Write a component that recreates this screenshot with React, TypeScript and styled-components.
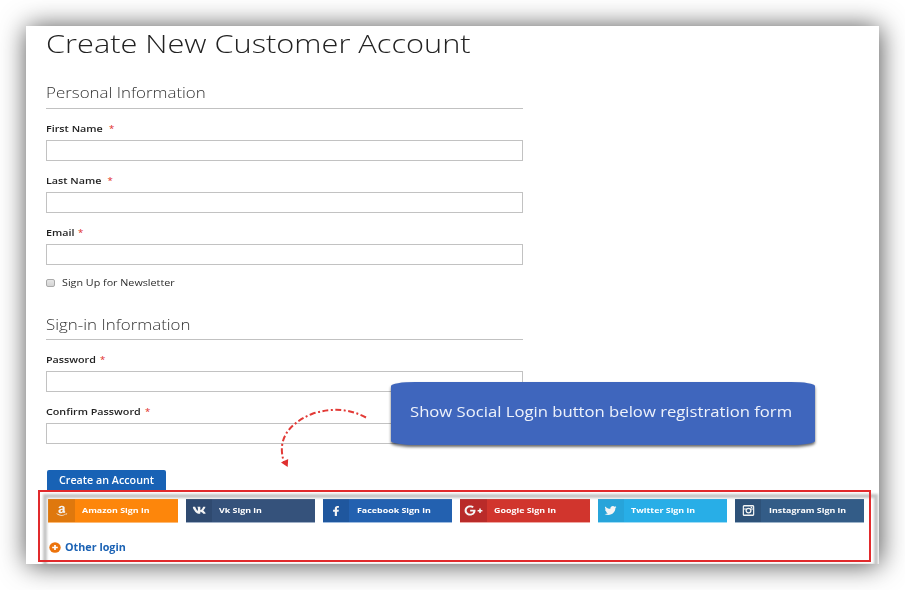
import React from "react";
import styled, { createGlobalStyle } from "styled-components";
import { FaAmazon, FaVk, FaFacebookF, FaGooglePlusG, FaTwitter } from "react-icons/fa";

const GlobalStyle = createGlobalStyle`
  * { box-sizing: border-box; }
  body { margin: 0; background: #fff; font-family: "Open Sans", sans-serif; }
`;

const Page = styled.main`
  width: 905px;
  height: 590px;
  padding: 26px;
  overflow: hidden;
  background: #fff;
`;

const Panel = styled.section`
  position: relative;
  width: 853px;
  height: 538px;
  padding-left: 20px;
  background: #fff;
  box-shadow: 1px 1px 25px rgba(0, 0, 0, 0.7);
  display: flex;
  flex-direction: column;
`;

/* Text widened horizontally from its left edge. */
const Wide = styled.span<{ $x: number }>`
  display: inline-block;
  white-space: nowrap;
  transform: scaleX(${(p) => p.$x});
  transform-origin: left center;
`;

const Title = styled.h1`
  margin: 0;
  height: 53px;
  font-size: 25.5px;
  line-height: 35px;
  font-weight: 300;
  color: #222;
`;

const Form = styled.form`
  width: 477px;
  display: flex;
  flex-direction: column;
`;

const Legend = styled.h2<{ $gap?: number; $line?: number }>`
  margin: ${(p) => p.$gap ?? 0}px 0 0;
  height: 30px;
  border-bottom: 1px solid #c1c1c1;
  font-size: 15px;
  line-height: ${(p) => p.$line ?? 27}px;
  font-weight: 300;
  color: #333;
`;

const Field = styled.label`
  height: 52px;
  padding-top: 10px;
  display: flex;
  flex-direction: column;
`;

const LabelRow = styled.span`
  height: 21px;
  display: flex;
  font-size: 9.6px;
  line-height: 19px;
  font-weight: 600;
  color: #222;
`;

const LabelText = styled.span<{ $w: number }>`
  width: ${(p) => p.$w}px;
`;

const Star = styled.span`
  color: #e02b27;
  font-weight: 400;
`;

const Input = styled.input`
  width: 477px;
  height: 21px;
  border: 1px solid #c2c2c2;
  background: #fff;
`;

const Newsletter = styled.label`
  display: flex;
  align-items: center;
  height: 17px;
  margin-top: 9px;
  font-size: 9.6px;
  color: #2c2c2c;
`;

const Box = styled.span`
  width: 9px;
  height: 8px;
  margin-right: 7px;
  border: 1px solid #a9a9a9;
  border-radius: 2px;
  background: linear-gradient(#e6e6e6, #d4d4d4);
`;

const Submit = styled.button`
  width: 119.5px;
  height: 21px;
  margin: 26px 0 0 0.5px;
  padding: 0 0 0 12px;
  border: 0;
  border-radius: 2px 2px 0 0;
  background: #1862b5;
  color: #fff;
  text-align: left;
  font: 600 9.8px/19px "Open Sans", sans-serif;
`;

const SocialRow = styled.div`
  display: grid;
  grid-template-columns: repeat(6, 129.5px);
  column-gap: 7.8px;
  margin: 8px 0 0 2.4px;
`;

const SocialButton = styled.a<{ $bg: string; $fade: string }>`
  display: flex;
  height: 24px;
  color: #fff;
  background: ${(p) => p.$bg};
  border-bottom: 1px solid ${(p) => p.$fade};
  font-size: 7.7px;
  line-height: 22px;
  font-weight: 700;
`;

const IconCell = styled.span<{ $bg: string }>`
  width: 26.5px;
  height: 23px;
  margin-right: 7.3px;
  display: flex;
  align-items: center;
  justify-content: center;
  background: ${(p) => p.$bg};
  color: #f4f4f4;

  svg { transform: scaleX(1.1); }
`;

const Other = styled.a`
  display: flex;
  align-items: center;
  gap: 4px;
  margin: 15px 0 0 3px;
  height: 18px;
  font-size: 9.8px;
  font-weight: 700;
  color: #1b62b4;
`;

const FrameClip = styled.div`
  position: absolute;
  left: 12px;
  top: 464px;
  width: 841px;
  height: 74px;
  overflow: hidden;
  pointer-events: none;
`;

const FrameShadow = styled.div`
  position: absolute;
  left: 4.5px;
  top: 4px;
  width: 835px;
  height: 74px;
  border: 4px solid #c6c6c6;
  filter: blur(1px);
`;

const Frame = styled.div`
  position: relative;
  width: 833px;
  height: 72px;
  border: 2px solid #e12a2c;
`;

const Callout = styled.aside`
  position: absolute;
  left: 365px;
  top: 356px;
  width: 424px;
  height: 62.5px;
  padding-left: 19px;
  border-radius: 24px / 4px;
  background: #3f66bd;
  box-shadow: 0 2px 3px rgba(0, 0, 0, 0.6);
  color: #eef2fb;
  font-size: 14px;
  line-height: 59px;
`;

const Arrow = styled.svg`
  position: absolute;
  left: 244px;
  top: 374px;
`;

const CameraIcon = () => (
  <svg width="11" height="11" viewBox="0 0 12 11" fill="none" stroke="#f4f4f4" preserveAspectRatio="none">
    <rect x="0.8" y="0.8" width="10.4" height="9.4" rx="1" strokeWidth="1.4" />
    <path d="M1 4h2.600M8.400 4H11" strokeWidth="1.1" />
    <ellipse cx="6" cy="5.6" rx="2.4" ry="2.2" strokeWidth="1.3" />
    <path d="M8.200 2.400h1.500" strokeWidth="1.4" />
  </svg>
);

const PlusIcon = () => (
  <svg width="12" height="11" viewBox="0 0 12 11">
    <ellipse cx="6" cy="5.5" rx="5.7" ry="5.2" fill="#ec730c" />
    <path d="M6 3v5M3.200 5.500h5.600" stroke="#fff" strokeWidth="1.7" />
  </svg>
);

const socials = [
  { name: "Amazon", bg: "#fd860b", dark: "#df780d", fade: "#fdb974", icon: <FaAmazon size={11.5} /> },
  { name: "Vk", bg: "#35527b", dark: "#2f4a70", fade: "#9fafc6", icon: <FaVk size={12.5} /> },
  { name: "Facebook", bg: "#2361b0", dark: "#1f579e", fade: "#9dbbe0", icon: <FaFacebookF size={10} /> },
  { name: "Google", bg: "#d1352d", dark: "#b92b29", fade: "#efa6a2", icon: <FaGooglePlusG size={17} /> },
  { name: "Twitter", bg: "#28aee7", dark: "#27a4da", fade: "#a0dcf5", icon: <FaTwitter size={11} /> },
  { name: "Instagram", bg: "#335c87", dark: "#2e5279", fade: "#9db3c9", icon: <CameraIcon /> },
];

const FormField = ({ label, width, type = "text" }: { label: string; width: number; type?: string }) => (
  <Field>
    <LabelRow>
      <LabelText $w={width}><Wide $x={1.12}>{label}</Wide></LabelText>
      <Star>*</Star>
    </LabelRow>
    <Input type={type} aria-label={label} />
  </Field>
);

export default function App() {
  return (
    <>
      <GlobalStyle />
      <Page>
        <Panel>
          <Title><Wide $x={1.205}>Create New Customer Account</Wide></Title>
          <Form>
            <Legend><Wide $x={1.127}>Personal Information</Wide></Legend>
            <FormField label="First Name" width={63} />
            <FormField label="Last Name" width={61.5} />
            <FormField label="Email" width={32} />
            <Newsletter><Box /><Wide $x={1.12}>Sign Up for Newsletter</Wide></Newsletter>
            <Legend $gap={19} $line={29}><Wide $x={1.127}>Sign-in Information</Wide></Legend>
            <FormField label="Password" width={54} type="password" />
            <FormField label="Confirm Password" width={99} type="password" />
            <Submit type="button"><Wide $x={1.095}>Create an Account</Wide></Submit>
          </Form>
          <SocialRow>
            {socials.map((s) => (
              <SocialButton key={s.name} $bg={s.bg} $fade={s.fade}>
                <IconCell $bg={s.dark}>{s.icon}</IconCell>
                <Wide $x={1.155}>{s.name} Sign in</Wide>
              </SocialButton>
            ))}
          </SocialRow>
          <Other><PlusIcon /><Wide $x={1.1}>Other login</Wide></Other>
          <FrameClip><FrameShadow /><Frame /></FrameClip>
          <Arrow width="104" height="72" viewBox="270 400 104 72">
            <path d="M366 417.500C350 409 333 407.500 313 413.500C287 424 277 441 284 462" fill="none" stroke="#e23a36" strokeWidth="2" strokeDasharray="6 2.500 2 2.500" />
            <path d="M281 462.500L288.200 459L287.700 467Z" fill="#df2f2f" />
          </Arrow>
          <Callout><Wide $x={1.19}>Show Social Login button below registration form</Wide></Callout>
        </Panel>
      </Page>
    </>
  );
}
